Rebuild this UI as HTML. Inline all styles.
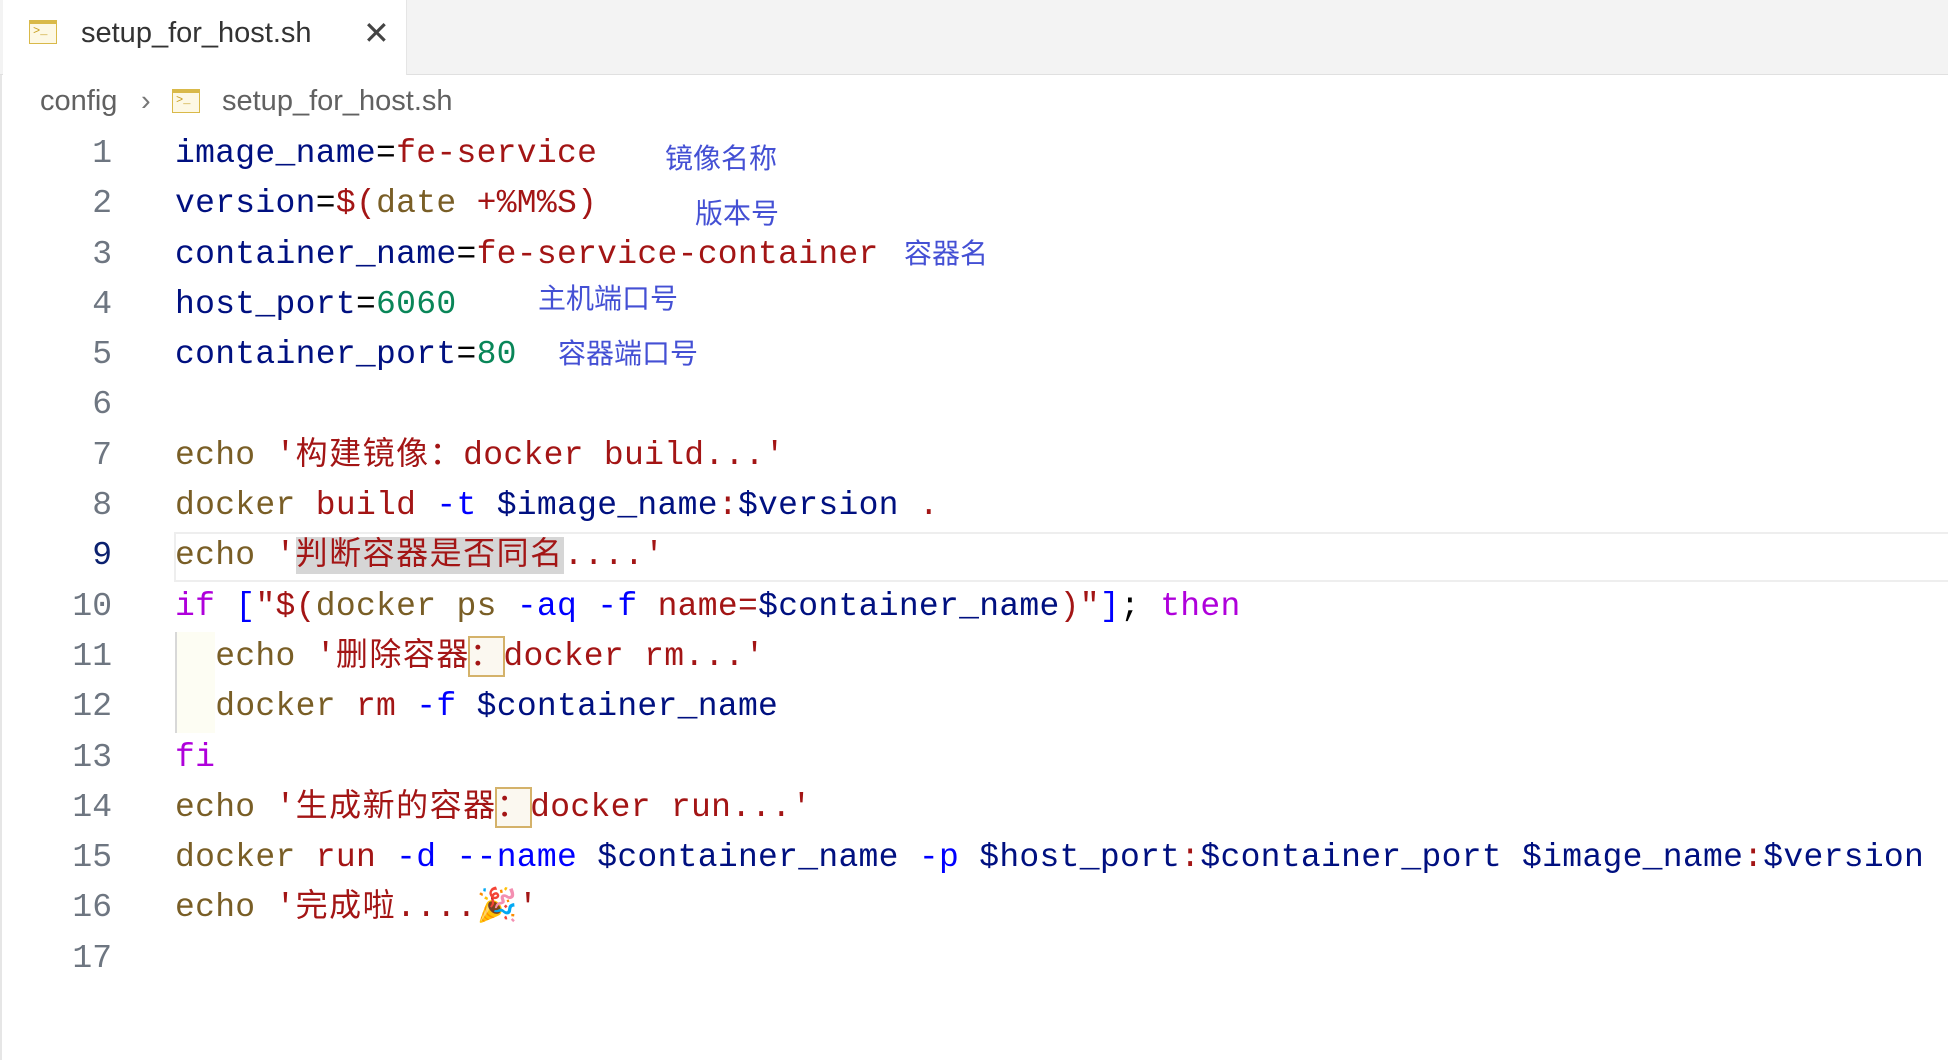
<!DOCTYPE html>
<html><head><meta charset="utf-8"><style>
body{margin:0;width:1948px;height:1060px;background:#fff;overflow:hidden;position:relative;font-family:"Liberation Sans","Noto Sans CJK SC",sans-serif}
.tabbar{position:absolute;left:0;top:0;width:1948px;height:74px;background:#f3f3f3;border-bottom:1px solid #e0e0e0}
.tab{position:absolute;left:3px;top:0;width:403px;height:75px;background:#fff;border-right:1px solid #e5e5e5}
.ic{position:absolute;width:26px;height:22px;border:1.5px solid #d9b949;background:#fdf8e4}
.ic:before{content:"";position:absolute;left:0;right:0;top:0;height:3px;background:#d9b949}
.ic span{position:absolute;left:3px;top:3px;font-size:12px;color:#c79e1e;font-family:"Liberation Mono",monospace}
.tt{position:absolute;left:78px;top:17px;font-size:29px;color:#333}
.x{position:absolute;left:360px;top:14px;font-size:32px;color:#444;font-weight:300}
.bc{position:absolute;top:85px;font-size:29px;color:#616161}
.edge{position:absolute;left:0;top:75px;width:2px;height:985px;background:#e6e6e6}
.ln{position:absolute;left:40px;width:72px;text-align:right;font-family:"Liberation Mono",monospace;font-size:33px;color:#6e7681;line-height:50.3px}
.code{position:absolute;left:175px;top:129px;font-family:"Liberation Mono","Noto Sans CJK SC",monospace;font-size:33px;letter-spacing:0.3px;line-height:50.3px;color:#000}
.code div{height:50.3px;white-space:pre}
.v{color:#001080}.s{color:#a31515}.c{color:#795e26}.n{color:#098658}.k{color:#af00db}.b{color:#0000ff}
.cj{font-size:32px;letter-spacing:1.5px}
.sel{background:#d6d6d6}
.br{outline:2px solid #d4b26a;background:#fbf8f0}
.ann{position:absolute;color:#4450d4;font-size:28px;font-family:"Noto Sans CJK SC",sans-serif;line-height:1}
.cur{position:absolute;left:174px;top:532px;width:1774px;height:46px;border:2px solid #eeeeee;border-right:none}
.guide{position:absolute;left:175px;top:632px;width:38px;height:101px;background:#fdfdf3;border-left:2px solid #d8d8d8}
</style></head><body>
<div class="tabbar"><div class="tab">
<div class="ic" style="left:26px;top:20px"><span>&gt;_</span></div>
<div class="tt">setup_for_host.sh</div><div class="x">✕</div></div></div>
<div class="bc" style="left:40px">config</div>
<div class="bc" style="left:141px;color:#777">›</div>
<div class="ic" style="left:172px;top:89px"><span>&gt;_</span></div>
<div class="bc" style="left:222px">setup_for_host.sh</div>
<div class="edge"></div>
<div class="cur"></div>
<div class="guide"></div>
<div class="ln" style="top:129px">1<br>2<br>3<br>4<br>5<br>6<br>7<br>8<br><span style="color:#0b216f">9</span><br>10<br>11<br>12<br>13<br>14<br>15<br>16<br>17</div>
<div class="code"><div><span class="v">image_name</span>=<span class="s">fe-service</span></div><div><span class="v">version</span>=<span class="s">$(</span><span class="c">date</span> <span class="s">+%M%S)</span></div><div><span class="v">container_name</span>=<span class="s">fe-service-container</span></div><div><span class="v">host_port</span>=<span class="n">6060</span></div><div><span class="v">container_port</span>=<span class="n">80</span></div><div></div><div><span class="c">echo</span> <span class="s">'<span class="cj">构建镜像：</span>docker build...'</span></div><div><span class="c">docker</span> <span class="s">build</span> <span class="b">-t</span> <span class="v">$image_name</span><span class="s">:</span><span class="v">$version</span> <span class="s">.</span></div><div><span class="c">echo</span> <span class="s">'<span class="cj sel">判断容器是否同名</span>....'</span></div><div><span class="k">if</span> <span class="b">[</span><span class="s">"$(</span><span class="c">docker</span> <span class="c">ps</span> <span class="b">-aq</span> <span class="b">-f</span> <span class="s">name=</span><span class="v">$container_name</span><span class="s">)"</span><span class="b">]</span>; <span class="k">then</span></div><div>  <span class="c">echo</span> <span class="s">'<span class="cj">删除容器<span class="br">：</span></span>docker rm...'</span></div><div>  <span class="c">docker</span> <span class="s">rm</span> <span class="b">-f</span> <span class="v">$container_name</span></div><div><span class="k">fi</span></div><div><span class="c">echo</span> <span class="s">'<span class="cj">生成新的容器<span class="br">：</span></span>docker run...'</span></div><div><span class="c">docker</span> <span class="s">run</span> <span class="b">-d</span> <span class="b">--name</span> <span class="v">$container_name</span> <span class="b">-p</span> <span class="v">$host_port</span><span class="s">:</span><span class="v">$container_port</span> <span class="v">$image_name</span><span class="s">:</span><span class="v">$version</span></div><div><span class="c">echo</span> <span class="s">'<span class="cj">完成啦</span>....🎉'</span></div><div></div></div>
<div class="ann" style="left:665px;top:143px">镜像名称</div>
<div class="ann" style="left:695px;top:198px">版本号</div>
<div class="ann" style="left:904px;top:238px">容器名</div>
<div class="ann" style="left:538px;top:283px">主机端口号</div>
<div class="ann" style="left:558px;top:338px">容器端口号</div>
</body></html>
